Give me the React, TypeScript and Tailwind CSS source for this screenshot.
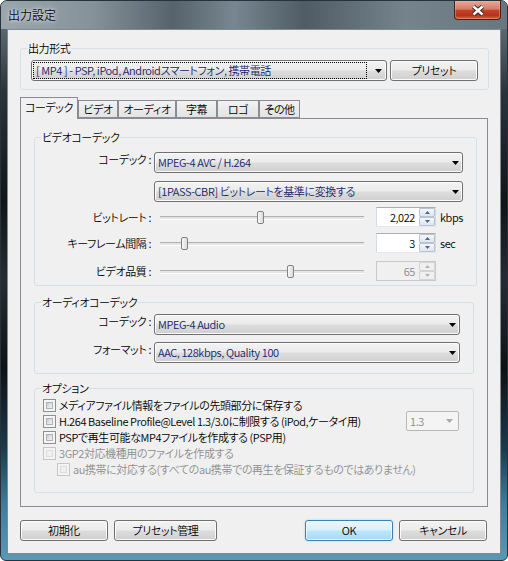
import type React from "react"

const btnBg =
  "bg-[linear-gradient(180deg,#f3f3f3_0%,#ebebeb_48%,#dddddd_52%,#cfcfcf_100%)] shadow-[inset_0_0_0_1px_#fbfbfb]"

const Arrow = ({ color = "#000" }: { color?: string }) => (
  <svg width="7" height="4" viewBox="0 0 7 4" className="shrink-0">
    <path d="M0 0H7L3.5 4Z" fill={color} />
  </svg>
)

const Combo = ({ text, className = "" }: { text: string; className?: string }) => (
  <div className={`flex h-[21px] items-center rounded-[3px] border border-[#707070] pl-[3px] pr-[3px] ${btnBg} ${className}`}>
    <span className="flex-1 truncate leading-[15px] text-[#16236b]">{text}</span>
    <Arrow />
  </div>
)

const Button = ({ label, className = "" }: { label: string; className?: string }) => (
  <div className={`flex h-[21px] items-center justify-center rounded-[3px] border border-[#707070] leading-[15px] ${btnBg} ${className}`}>
    {label}
  </div>
)

const SpinHalf = ({ up, disabled }: { up?: boolean; disabled?: boolean }) => (
  <div
    className={`flex h-[9px] items-center justify-center rounded-[1px] border ${
      disabled
        ? "border-[#d4d4d4] bg-[#f0f0f0]"
        : "border-[#b7c3d1] bg-[linear-gradient(180deg,#f4f7fa,#dde5ee)]"
    }`}
  >
    <svg width="5" height="3" viewBox="0 0 5 3">
      <path d={up ? "M0 3H5L2.5 0Z" : "M0 0H5L2.5 3Z"} fill={disabled ? "#b5b5b5" : "#4f6487"} />
    </svg>
  </div>
)

const Spin = ({ value, disabled }: { value: string; disabled?: boolean }) => (
  <div
    className={`flex h-[20px] w-[60px] shrink-0 border ${
      disabled ? "border-[#c9c9c9] bg-[#f0f0f0] text-[#8d8d8d]" : "border-[#abadb3] border-b-[#e3e9ef] border-x-[#d5dbe3] bg-white"
    }`}
  >
    <span className="flex-1 pr-[4px] text-right leading-[18px]">{value}</span>
    <div className="flex w-[16px] flex-col">
      <SpinHalf up disabled={disabled} />
      <SpinHalf disabled={disabled} />
    </div>
  </div>
)

const Slider = ({ pos }: { pos: number }) => (
  <div className="flex h-[20px] w-[216px] shrink-0 items-center px-[6px]">
    <div className="relative h-[3px] w-full border-t border-[#b0b0b0] bg-[#e4e4e4] shadow-[0_1px_0_#ffffff]">
      <div
        className="absolute top-[-6px] h-[13px] w-[7px] rounded-[2px] border border-[#838383] bg-[linear-gradient(90deg,#f7f7f7,#dcdcdc)]"
        style={{ left: pos }}
      />
    </div>
  </div>
)

const Check = ({ disabled }: { disabled?: boolean }) => (
  <div
    className={`h-[13px] w-[13px] shrink-0 border p-[2px] ${
      disabled ? "border-[#c6c6c6] bg-[#f4f4f4]" : "border-[#8e8f8f] bg-[#f4f4f4]"
    }`}
  >
    <div
      className={`h-full w-full border ${
        disabled
          ? "border-[#dcdcdc] bg-[#f0f0f0]"
          : "border-[#aeb3b9] bg-[linear-gradient(135deg,#c9cdd2,#f4f4f4)]"
      }`}
    />
  </div>
)

const Group: React.FC<{ title: string; className?: string; children: React.ReactNode }> = ({
  title,
  className = "",
  children,
}) => (
  <fieldset className={`ml-[13px] w-[440px] rounded-[3px] border border-[#d5dfe5] pl-[8px] pr-[13px] ${className}`}>
    <legend className="-ml-[2px] px-[1px] leading-[16px]">{title}</legend>
    {children}
  </fieldset>
)

const Label = ({ text }: { text: string }) => (
  <div className="w-[108px] shrink-0 text-right leading-[15px]">{text} :</div>
)

const tabs = [
  { label: "コーデック", w: "w-[58px]" },
  { label: "ビデオ", w: "w-[40px]" },
  { label: "オーディオ", w: "w-[58px]" },
  { label: "字幕", w: "w-[41px]" },
  { label: "ロゴ", w: "w-[42px]" },
  { label: "その他", w: "w-[41px]" },
]

const App: React.FC = () => {
  return (
    <div className="h-[561px] w-[508px] overflow-hidden whitespace-nowrap rounded-t-[7px] rounded-b-[6px] border border-[#26333b] bg-[linear-gradient(180deg,#7f8d96_0%,#5b6871_5%,#2c343a_16%,#111518_36%,#262c31_50%,#0f1215_66%,#1b3a4b_80%,#3f7c9b_90%,#5a98b5_100%)] text-[11px] tracking-[-0.4px] text-black [font-family:'Noto_Sans_CJK_JP','Liberation_Sans',sans-serif] [font-feature-settings:'palt'] [font-weight:350]">
      <div className="flex h-[28px] items-start justify-between bg-[linear-gradient(90deg,#9aa6ac_0%,#85929a_18%,#56636c_34%,#778690_46%,#4f5c65_60%,#75838c_80%,#687680_100%)] pr-[6px]">
        <span className="pl-[7px] pt-[6px] text-[12px] leading-[16px] tracking-normal text-[#0a0a0a] [text-shadow:0_0_6px_#ffffffcc,0_0_3px_#ffffffaa]">
          出力設定
        </span>
        <div className="flex h-[19px] w-[47px] items-center justify-center rounded-b-[4px] border border-t-0 border-[#4a2119] bg-[linear-gradient(180deg,#e7aa9c_0%,#d77a66_45%,#c3432a_52%,#b8321a_80%,#d8663f_100%)] shadow-[inset_0_0_0_1px_#f0b6a666]">
          <svg width="14" height="11" viewBox="0 0 14 11">
            <path d="M2.5 1.5L11.5 9.5M11.5 1.5L2.5 9.5" stroke="#3a2420" strokeWidth="4.4" />
            <path d="M2.5 1.5L11.5 9.5M11.5 1.5L2.5 9.5" stroke="#ffffff" strokeWidth="2.4" />
          </svg>
        </div>
      </div>

      <div className="ml-[6px] flex h-[525px] w-[494px] flex-col border border-[#7d8b94] bg-[#f0f0f0]">
        <fieldset className="ml-[12px] mt-[10px] w-[469px] rounded-[3px] border border-[#d5dfe5] px-[10px] pb-[8px] pt-[4px]">
          <legend className="-ml-[4px] px-[1px] leading-[16px]">出力形式</legend>
          <div className="flex gap-[3px]">
            <div className={`flex h-[21px] flex-1 items-center rounded-[3px] border border-[#707070] pr-[4px] ${btnBg}`}>
              <span className="ml-[1px] mr-[8px] flex h-[17px] flex-1 items-center border border-dotted border-black pl-[2px] leading-[15px] text-[#16236b]">
                [ MP4 ] - PSP, iPod, Androidスマートフォン, 携帯電話
              </span>
              <Arrow />
            </div>
            <Button label="プリセット" className="w-[88px]" />
          </div>
        </fieldset>

        <div className="ml-[12px] mt-[7px] flex items-end">
          {tabs.map((t, i) =>
            i === 0 ? (
              <div
                key={t.label}
                className={`relative z-10 -mb-px flex h-[22px] ${t.w} items-start justify-center overflow-hidden border border-b-0 border-[#898c95] bg-[#f0f0f0] pt-[2px] leading-[15px]`}
              >
                {t.label}
              </div>
            ) : (
              <div
                key={t.label}
                className={`flex h-[18px] ${t.w} items-center justify-center overflow-hidden border border-[#898c95] bg-[linear-gradient(180deg,#f2f2f2,#e3e3e3)] leading-[15px]`}
              >
                {t.label}
              </div>
            )
          )}
        </div>

        <div className="ml-[12px] w-[468px] border border-[#898c95] bg-[#f0f0f0] pb-[13px]">
          <Group title="ビデオコーデック" className="mt-[10px] pb-[4px] pt-[7px]">
            <div className="flex gap-[3px]">
              <Label text="コーデック" />
              <Combo text="MPEG-4 AVC / H.264" className="flex-1" />
            </div>
            <div className="mt-[8px] flex gap-[3px]">
              <div className="w-[108px] shrink-0" />
              <Combo text="[1PASS-CBR] ビットレートを基準に変換する" className="flex-1" />
            </div>
            <div className="mt-[5px] flex items-center gap-[3px]">
              <Label text="ビットレート" />
              <Slider pos={97} />
              <div className="ml-[3px] flex items-center gap-[4px]">
                <Spin value="2,022" />
                <span className="leading-[15px]">kbps</span>
              </div>
            </div>
            <div className="mt-[6px] flex items-center gap-[3px]">
              <Label text="キーフレーム間隔" />
              <Slider pos={21} />
              <div className="ml-[3px] flex items-center gap-[4px]">
                <Spin value="3" />
                <span className="leading-[15px]">sec</span>
              </div>
            </div>
            <div className="mt-[8px] flex items-center gap-[3px]">
              <Label text="ビデオ品質" />
              <Slider pos={127} />
              <div className="ml-[3px] flex items-center">
                <Spin value="65" disabled />
              </div>
            </div>
          </Group>

          <Group title="オーディオコーデック" className="mt-[8px] pb-[10px] pt-[4px]">
            <div className="flex gap-[3px]">
              <Label text="コーデック" />
              <Combo text="MPEG-4 Audio" className="flex-1" />
            </div>
            <div className="mt-[7px] flex gap-[3px]">
              <Label text="フォーマット" />
              <Combo text="AAC, 128kbps, Quality 100" className="flex-1" />
            </div>
          </Group>

          <Group title="オプション" className="mt-[6px] pb-[15px] pt-[1px]">
            <div className="flex h-[16px] items-center gap-[3px]">
              <Check />
              <span className="leading-[15px]">メディアファイル情報をファイルの先頭部分に保存する</span>
            </div>
            <div className="flex h-[16px] items-center gap-[3px]">
              <Check />
              <span className="leading-[15px]">H.264 Baseline Profile@Level 1.3/3.0に制限する (iPod,ケータイ用)</span>
              <div className="-my-[2px] ml-auto mr-[1px] flex h-[20px] w-[53px] shrink-0 items-center rounded-[2px] border border-[#b5b9bc] bg-[#f4f4f4] pl-[3px] pr-[5px] text-[#8a8a8a]">
                <span className="flex-1 leading-[15px]">1.3</span>
                <Arrow color="#a9a9a9" />
              </div>
            </div>
            <div className="flex h-[16px] items-center gap-[3px]">
              <Check />
              <span className="leading-[15px]">PSPで再生可能なMP4ファイルを作成する (PSP用)</span>
            </div>
            <div className="flex h-[16px] items-center gap-[3px] text-[#8d8d8d]">
              <Check disabled />
              <span className="leading-[15px]">3GP2対応機種用のファイルを作成する</span>
            </div>
            <div className="ml-[14px] flex h-[16px] items-center gap-[3px] text-[#8d8d8d]">
              <Check disabled />
              <span className="leading-[15px]">au携帯に対応する(すべてのau携帯での再生を保証するものではありません)</span>
            </div>
          </Group>
        </div>

        <div className="ml-[12px] mr-[13px] mt-[13px] flex gap-[6px]">
          <Button label="初期化" className="w-[88px]" />
          <Button label="プリセット管理" className="w-[103px]" />
          <div className="ml-auto flex h-[21px] w-[88px] items-center justify-center rounded-[3px] border border-[#3c7fb1] bg-[linear-gradient(180deg,#eaf6fd_0%,#d9f0fc_48%,#bee6fd_52%,#a7d9f5_100%)] leading-[15px] shadow-[inset_0_0_0_1px_#ffffffaa,0_0_2px_#9ed0f0]">
            OK
          </div>
          <Button label="キャンセル" className="w-[88px]" />
        </div>
      </div>
    </div>
  )
}

export default App
